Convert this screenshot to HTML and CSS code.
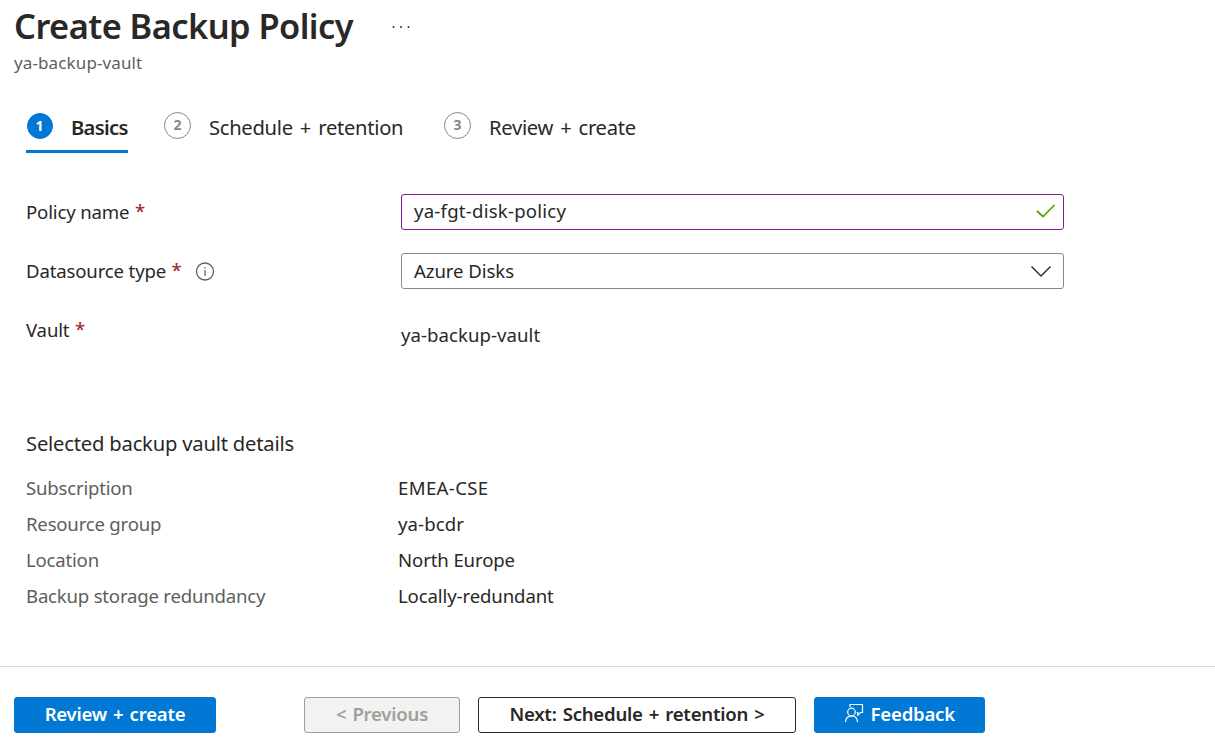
FILE: index.html
```html
<!DOCTYPE html>
<html lang="en">
<head>
<meta charset="utf-8">
<title>Create Backup Policy</title>
<link rel="stylesheet" href="styles.css">
</head>
<body>
<main class="page">
  <header class="header">
    <div class="title-row"><h1 class="title">Create Backup Policy</h1>
      <svg class="more" width="18" height="4" viewBox="0 0 18 4" fill="#323130"><circle cx="1.500" cy="2" r="1"/><circle cx="9" cy="2" r="1"/><circle cx="16.500" cy="2" r="1"/></svg></div>
    <p class="subtitle">ya-backup-vault</p>
  </header>
  <nav class="tabs">
    <a class="tab tab-active"><i class="step">1</i><span>Basics</span></a>
    <a class="tab tab-schedule"><i class="step">2</i><span>Schedule + retention</span></a>
    <a class="tab tab-review"><i class="step">3</i><span>Review + create</span></a>
  </nav>
  <section class="form">
    <div class="field"><label class="label"><span>Policy name</span> <b class="req">*</b></label>
      <div class="box box-edited"><span class="policy-name">ya-fgt-disk-policy</span>
        <svg class="check" width="20" height="14" viewBox="0 0 20 14" fill="none" stroke="#57a300" stroke-width="1.700"><path d="M1 7 7 12.500 18.500 1"/></svg></div></div>
    <div class="field"><label class="label"><span>Datasource type</span> <b class="req">*</b>
        <svg class="info" width="20" height="20" viewBox="0 0 20 20" fill="none" stroke="#605e5c"><circle cx="10" cy="10.500" r="8.500" stroke-width="1.300"/><path d="M10 9v6M10 6v1.500" stroke-width="1.200"/></svg></label>
      <div class="box box-select"><span>Azure Disks</span>
        <svg width="22" height="13" viewBox="0 0 22 13" fill="none" stroke="#323130" stroke-width="1.500"><path d="M1.500 1.500 11 11 20.500 1.500"/></svg></div></div>
    <div class="field"><label class="label"><span>Vault</span> <b class="req">*</b></label>
      <div class="value">ya-backup-vault</div></div>
  </section>
  <section class="details">
    <h2 class="details-title">Selected backup vault details</h2>
    <dl class="details-list">
      <dt>Subscription</dt><dd class="caps">EMEA-CSE</dd>
      <dt>Resource group</dt><dd class="group">ya-bcdr</dd>
      <dt>Location</dt><dd>North Europe</dd>
      <dt>Backup storage redundancy</dt><dd>Locally-redundant</dd>
    </dl>
  </section>
  <footer class="footer">
    <button class="btn btn-primary btn-review">Review + create</button>
    <button class="btn btn-disabled" disabled>&lt; Previous</button>
    <button class="btn btn-next">Next: Schedule + retention &gt;</button>
    <button class="btn btn-primary btn-feedback">
      <svg width="20" height="20" viewBox="0 0 20 20" fill="none" stroke="#fff" stroke-width="1.200"><circle cx="7.500" cy="9" r="3.800"/><path d="M1.500 19c0-3.700 2.500-6.200 6-6.200s6 2.500 6 6.200M6 4V1.500h12.500v8h-2l-2.800 2.700V9.500h-1"/></svg><span>Feedback</span></button>
  </footer>
</main>
</body>
</html>
```

FILE: styles.css
```css
*{box-sizing:border-box}
body{margin:0;background:#fff;color:#292827;font-family:"Noto Sans","Open Sans",sans-serif;font-size:18.6px;line-height:24px}
h1,h2,p,dl,dd{margin:0}
.page{width:1215px;height:750px;display:flex;flex-direction:column;overflow:hidden;white-space:nowrap}
.header{height:100px;padding:3px 0 0 14px}
.title-row{display:flex;height:48px}
.title{width:378px;font-size:34.400px;font-weight:560;line-height:46px;letter-spacing:-.55px}
.more{margin-top:22px}
.subtitle{font-size:17px;color:#605e5c;letter-spacing:.12px}
.tabs{display:flex;height:53px;padding-left:26px}
.tab{display:flex;font-size:20.200px;line-height:26px;padding-top:14px;letter-spacing:-.3px;word-spacing:2.200px}
.tab-active{width:102px;margin-right:36px;font-weight:560;letter-spacing:-.7px;border-bottom:3px solid #0078d4}
.tab-schedule{width:280px}
.step{flex:none;width:27px;height:27px;margin:-2px 18px 0 0;border:1.500px solid #8a8886;border-radius:50%;font-size:14px;font-style:normal;font-weight:700;line-height:24px;text-align:center;letter-spacing:0;color:#8a8886}
.tab-active .step{width:26px;height:26px;background:#0078d4;border-color:#0078d4;color:#fff;margin:-1.500px 18.500px 0 .5px;line-height:23px}
.form{height:275px;padding:41px 0 0 26px}
.field{display:flex;height:59px}
.label{width:375px;display:flex;gap:6px;line-height:36px;letter-spacing:-.16px}
.req{color:#a4262c;font-weight:500;line-height:34px;margin-left:-.5px}
.info{margin:8px 0 0 7.500px}
.box{width:663px;height:36px;display:flex;align-items:center;justify-content:space-between;padding:0 8px 0 12px;border:1px solid #8a8886;border-radius:3px;letter-spacing:-.08px}
.box-edited{border-color:#881798;padding:0 7px 2px 12px}
.policy-name{letter-spacing:.22px}
.box-select{padding-right:11px}
.value{line-height:46px;letter-spacing:.05px}
.details{height:238px;padding-left:26px}
.details-title{font-size:20.200px;font-weight:400;line-height:30px;letter-spacing:-.2px}
.details-list{display:grid;grid-template-columns:372px 1fr;grid-auto-rows:36px;line-height:36px;margin-top:12px;letter-spacing:-.12px}
dt{color:#605e5c;letter-spacing:-.21px}
.caps{letter-spacing:.35px}
.group{letter-spacing:.1px}
.footer{height:84px;border-top:1px solid #d9d9d9;padding:30px 0 0 14px;display:flex}
.btn{height:36px;padding:0 0 3px;border:1px solid #292827;border-radius:3px;background:#fff;color:#292827;font:560 18.600px "Noto Sans",sans-serif;display:flex;align-items:center;justify-content:center;letter-spacing:-.24px;word-spacing:1.500px}
.btn-primary{background:#0078d4;border-color:#0078d4;color:#fff}
.btn-review{width:202px;margin-right:88px}
.btn-disabled{width:156px;margin-right:18px;background:#f3f2f1;border-color:#a19f9d;color:#a19f9d}
.btn-next{width:318px;margin-right:18px}
.btn-feedback{width:171px;gap:6.500px}
.btn-feedback svg{margin-top:-2px}
```
